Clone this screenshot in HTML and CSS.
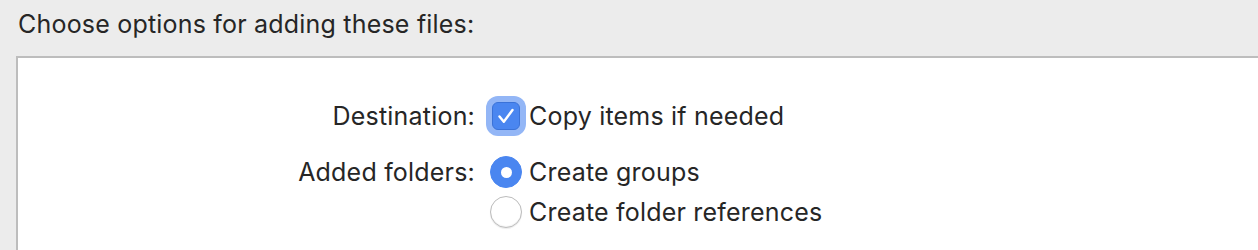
FILE: index.html
```html
<!DOCTYPE html>
<html lang="en">
<head>
    <meta charset="UTF-8">
    <title>Choose options</title>
    <link rel="stylesheet" href="styles.css">
</head>
<body>
    <h1 class="title">Choose options for adding these files:</h1>
    <div class="panel">
        <div class="form-row">
            <div class="label">Destination:</div>
            <div class="options">
                <label class="option">
                    <span class="control">
                        <span class="checkbox checked">
                            <svg viewBox="0 0 28 28" width="28" height="28"><path d="M7.5 14.5 L11.8 19.8 L20.5 8" fill="none" stroke="#fff" stroke-width="2.4" stroke-linecap="round" stroke-linejoin="round"/></svg>
                        </span>
                    </span>
                    <span class="option-text">Copy items if needed</span>
                </label>
            </div>
        </div>
        <div class="form-row">
            <div class="label">Added folders:</div>
            <div class="options">
                <label class="option">
                    <span class="control"><span class="radio selected"></span></span>
                    <span class="option-text">Create groups</span>
                </label>
                <label class="option">
                    <span class="control"><span class="radio"></span></span>
                    <span class="option-text">Create folder references</span>
                </label>
            </div>
        </div>
    </div>
</body>
</html>
```

FILE: styles.css
```css
body {
    margin: 0;
    background: #ececec;
    font-family: Inter, "Liberation Sans", Arial, sans-serif;
    color: #262626;
    letter-spacing: 0.2px;
    height: 250px;
    overflow: hidden;
}

.title {
    margin: 0;
    padding: 7px 0 0 18px;
    font-size: 25px;
    font-weight: normal;
    line-height: 34px;
    height: 49px;
}

/* white box, open to the right and bottom */
.panel {
    margin-left: 16px;
    border-top: 2px solid #bdbdbd;
    border-left: 2px solid #bdbdbd;
    background: #fff;
    height: 154px;
    padding-top: 38px;
}

.form-row {
    display: flex;
    margin-bottom: 16px;
}

.label {
    width: 457px;
    text-align: right;
    font-size: 25px;
    line-height: 40px;
    padding-right: 11px;
}

.options {
    display: flex;
    flex-direction: column;
}

.option {
    display: flex;
    align-items: center;
    height: 40px;
    font-size: 25px;
}

.option + .option {
    margin-top: -0.5px;
}

.control {
    width: 40px;
    height: 40px;
    display: flex;
    justify-content: center;
    align-items: center;
    margin-right: 3px;
}

.checkbox {
    width: 28px;
    height: 28px;
    box-sizing: border-box;
    border-radius: 6px;
    background: #4a86f0;
    border: 1px solid #3a72d8;
    box-shadow: 0 0 0 6px #93b6f6;
    display: flex;
    justify-content: center;
    align-items: center;
}

.checkbox svg {
    display: block;
    margin: -1px;
}

.radio {
    width: 32px;
    height: 32px;
    box-sizing: border-box;
    border-radius: 50%;
    background: #fff;
    border: 1px solid #bcbcbc;
    box-shadow: inset 0 -1px 1px rgba(0, 0, 0, 0.05), 0 1px 1px rgba(0, 0, 0, 0.08);
}

.radio.selected {
    background: #4a86f0;
    border-color: #4a86f0;
    box-shadow: none;
    display: flex;
    justify-content: center;
    align-items: center;
}

.radio.selected::after {
    content: "";
    width: 11px;
    height: 11px;
    border-radius: 50%;
    background: #fff;
}
```
